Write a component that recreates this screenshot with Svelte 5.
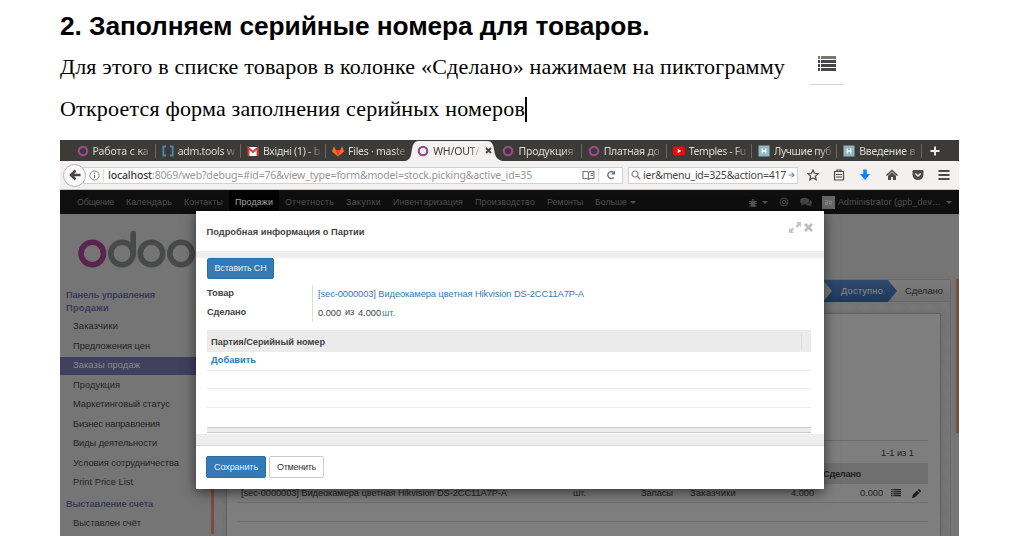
<script>
  // Tracks a label so that it fills the given width in pixels.
  function fit(node, width) {
    const count = [...node.textContent].length;
    const natural = node.getBoundingClientRect().width;
    node.style.letterSpacing = `${(width - natural) / count}px`;
  }

  const tabs = [
    { icon: 'ring', text: 'Работа с ка', w: 56 },
    { icon: 'brackets', text: 'adm.tools w', w: 57 },
    { icon: 'mail', text: 'Вхідні (1) - b', w: 57 },
    { icon: 'fox', text: 'Files · maste', w: 57 },
    { icon: 'ring', text: 'WH/OUT/', w: 46, active: true },
    { icon: 'ring', text: 'Продукция', w: 55 },
    { icon: 'ring', text: 'Платная до', w: 56 },
    { icon: 'tube', text: 'Temples - Fu', w: 57 },
    { icon: 'habr', text: 'Лучшие пуб', w: 57 },
    { icon: 'habr', text: 'Введение в', w: 56 }
  ];

  const nav = [
    ['Общение', 37], ['Календарь', 46], ['Контакты', 39], ['Продажи', 38], ['Отчетность', 49],
    ['Закупки', 35], ['Инвентаризация', 70], ['Производство', 60], ['Ремонты', 36], ['Больше', 32]
  ];

  const side = [
    ['Заказчики', 45], ['Предложения цен', 77], ['Заказы продаж', 67], ['Продукция', 47],
    ['Маркетинговый статус', 97], ['Бизнес направления', 87], ['Виды деятельности', 84],
    ['Условия сотрудничества', 106], ['Print Price List', 60]
  ];
</script>

<article>
  <h1><span use:fit={589.5}>2. Заполняем серийные номера для товаров.</span></h1>
  <div class="para first">
    <span use:fit={725}>Для этого в списке товаров в колонке «Сделано» нажимаем на пиктограмму</span>
    <div class="picto">
      <svg width="18" height="15" viewBox="0 0 18 15">
        <path fill="#77776c" d="M0 0h2v3H0zM3 0h15v3H3z" />
        <path fill="#44444a" d="M0 4h2v3H0zM3 4h15v3H3zM0 8h2v3H0zM3 8h15v3H3zM0 12h2v3H0zM3 12h15v3H3z" />
      </svg>
    </div>
  </div>
  <div class="para second"><span use:fit={465}>Откроется форма заполнения серийных номеров</span><i class="cursor"></i></div>

  <section class="shot">
    <div class="tabs">
      {#each tabs as t, i}
        <div class="tab" class:active={t.active} class:nosep={i === 3 || i === 4}>
          {#if t.active}
            <svg class="shape" width="98" height="21" viewBox="0 0 98 21"><path fill="#f3f2f1" d="M0 21C6 20 6 15 7 9 8 3 10 1 14 1H82c5 0 6 3 7 8 1 6 2 11 9 12z" /></svg>
          {/if}
          <svg class="fav" width="12" height="12" viewBox="0 0 12 12">
            {#if t.icon === 'ring'}
              <circle cx="6" cy="6" r="4.2" fill="none" stroke="#9c4a8c" stroke-width="2.2" />
            {:else if t.icon === 'brackets'}
              <path d="M4 1.5H1.3v9H4M8 1.5h2.7v9H8" fill="none" stroke="#4b86b8" stroke-width="1.8" />
            {:else if t.icon === 'mail'}
              <path fill="#fff" d="M1 2h10v9H1z" /><path d="M1.5 11V3L6 7l4.500-4v8" fill="none" stroke="#d8403a" stroke-width="2" />
            {:else if t.icon === 'fox'}
              <path fill="#fc6d26" d="M0 6.500 2 1l1.700 4h4.600L10 1l2 5.500-6 5z" /><path fill="#e24329" d="M3.700 5h4.600L6 11.500z" />
            {:else if t.icon === 'tube'}
              <rect x="0" y="1.500" width="12" height="9" rx="2" fill="#f00a0a" /><path fill="#fff" d="M4.700 3.800 8.300 6 4.700 8.200z" />
            {:else}
              <path fill="#8db9c7" d="M.5.500h11v11H.5z" /><path d="M4.300 3.500v5M7.700 3.500v5M4 6h4" stroke="#fff" stroke-width="1.300" />
            {/if}
          </svg>
          <span class="clip" class:short={t.active}><span use:fit={t.w}>{t.text}</span></span>
          {#if t.active}
            <svg class="x" width="7" height="7" viewBox="0 0 7 7"><path d="M1 1l5 5M6 1 1 6" stroke="#4a4946" stroke-width="1.900" /></svg>
          {/if}
        </div>
      {/each}
      <svg class="plus" width="10" height="10" viewBox="0 0 10 10"><path d="M5 .5v9M.5 5h9" stroke="#eee" stroke-width="1.900" /></svg>
    </div>

    <div class="toolbar">
      <div class="back"><svg width="12" height="12" viewBox="0 0 12 12"><path d="M6.500 1.500 2 6l4.500 4.500M2 6h9.500" fill="none" stroke="#464646" stroke-width="2.500" /></svg></div>
      <div class="url">
        <svg width="11" height="11" viewBox="0 0 11 11"><circle cx="5.500" cy="5.500" r="4.600" fill="none" stroke="#777" stroke-width=".9" /><path d="M5.500 4.700v3.500M5.500 2.500v1.200" stroke="#666" stroke-width="1.100" /></svg>
        <i class="bar"></i>
        <span class="addr" use:fit={424}><b>localhost</b>:8069/web?debug=#id=76&amp;view_type=form&amp;model=stock.picking&amp;active_id=35</span>
        <svg class="book" width="13" height="10" viewBox="0 0 13 10"><path d="M1 1.500h4l1.500 1L8 1.500h4v7H8l-1.500 1-1.500-1H1zM6.500 3v6M8.500 3.500H11M8.500 5.500H11" fill="none" stroke="#777" stroke-width="1.100" /></svg>
        <i class="bar"></i>
        <svg class="reload" width="10" height="10" viewBox="0 0 10 10"><path d="M7.700 7.500A3.400 3.400 0 1 1 7.600 2.500" fill="none" stroke="#64707c" stroke-width="1.300" /><path fill="#64707c" d="M9 .5v4H5z" /></svg>
      </div>
      <div class="search">
        <svg width="10" height="10" viewBox="0 0 10 10"><circle cx="4" cy="4" r="3" fill="none" stroke="#858585" stroke-width="1.200" /><path d="m6.200 6.200 3 3" stroke="#858585" stroke-width="1.600" /></svg>
        <span use:fit={143}>ier&amp;menu_id=325&amp;action=417</span>
        <svg width="7" height="8" viewBox="0 0 8 8"><path d="M.5 4H7M4 1.300 7 4 4 6.700" fill="none" stroke="#7d8d99" stroke-width="1.300" /></svg>
      </div>
      <div class="tools">
        <svg width="12" height="12" viewBox="0 0 12 12"><path d="m6 1 1.500 3.300 3.600.4-2.700 2.400.8 3.600L6 8.900l-3.200 1.800.8-3.600L.9 4.700l3.600-.4z" fill="none" stroke="#4b4b4b" stroke-width="1.200" /></svg>
        <svg width="12" height="12" viewBox="0 0 12 12"><path d="M1.500 2.500h9v8.500h-9zM4 2.500V1h4v1.500M3 5.500h6M3 8h6" fill="none" stroke="#4b4b4b" stroke-width="1.200" /></svg>
        <svg width="12" height="12" viewBox="0 0 12 12"><path fill="#0a84ff" d="M4.200.5h3.600V5H11L6 11 1 5h3.200z" /></svg>
        <svg width="12" height="12" viewBox="0 0 12 12"><path d="M.5 6.500 6 1.500l5.500 5" fill="none" stroke="#4b4b4b" stroke-width="1.500" /><path fill="#4b4b4b" d="M2 6.800 6 3.300l4 3.500V11H7V8H5v3H2z" /></svg>
        <svg width="12" height="12" viewBox="0 0 12 12"><path fill="#4b4b4b" d="M1.500 1h9q1 0 1 1v3.500a5.500 5.500 0 0 1-11 0V2q0-1 1-1z" /><path d="M3.300 4.500 6 7l2.700-2.500" fill="none" stroke="#f3f2f1" stroke-width="1.500" /></svg>
        <svg width="12" height="12" viewBox="0 0 12 12"><path d="M.5 2h11M.5 6h11M.5 10h11" stroke="#4b4b4b" stroke-width="2" /></svg>
      </div>
    </div>

    <nav>
      {#each nav as [text, w], i}
        <div class:on={i === 3}><span use:fit={w}>{text}</span></div>
      {/each}
      <i class="caret"></i>
      <div class="right">
        <svg width="8" height="9" viewBox="0 0 8 9"><path fill="#555" d="M2.500 2.500a1.500 1.500 0 0 1 3 0zM1.500 3h5v4.500a2.500 1.500 0 0 1-5 0z" /><path d="M0 3.500h8M0 5.500h8M0 8h8" stroke="#555" stroke-width=".8" /></svg>
        <i class="caret c1"></i>
        <svg class="at" width="10" height="10" viewBox="0 0 10 10"><circle cx="5" cy="5" r="4" fill="none" stroke="#444" /><circle cx="5" cy="5" r="1.700" fill="none" stroke="#444" /><path d="M7 3v3.500h1.500" fill="none" stroke="#444" /></svg>
        <svg class="chat" width="12" height="10" viewBox="0 0 12 10"><ellipse cx="4.500" cy="4" rx="4.500" ry="3.300" fill="#444" /><path fill="#444" d="M10 3c3 2 2 4 1 4.500l1 2-3-1c-2 .3-3-.3-3.500-1C8 7 10 6 10 3zM2 6 1 8.500 5 7z" /></svg>
        <svg class="ava" width="13" height="13" viewBox="0 0 13 13"><path fill="#666" d="M0 0h13v13H0z" /><path d="M3.500 4.500h2v4h-2v-2h2M7.500 5h2v3h-2z" fill="none" stroke="#858585" /></svg>
        <span class="user" use:fit={103}>Administrator (gpb_dev…</span>
        <i class="caret c2"></i>
      </div>
    </nav>

    <div class="app">
      <aside>
        <svg class="logo" width="137" height="76" viewBox="0 0 137 76">
          <g fill="none" stroke-width="5.600">
            <circle cx="32.300" cy="39.500" r="11.200" stroke="#5b2350" />
            <g stroke="#484949"><circle cx="62" cy="39.500" r="11.200" /><path d="M73.200 39.500V19.500" stroke-linecap="round" /><circle cx="91.500" cy="39.500" r="11.200" /><circle cx="121" cy="39.500" r="11.200" /></g>
          </g>
        </svg>
        <h4><span use:fit={89}>Панель управления</span></h4>
        <h4><span use:fit={43}>Продажи</span></h4>
        <ul>
          {#each side as [text, w], i}
            <li class:sel={i === 2}><span use:fit={w}>{text}</span></li>
          {/each}
        </ul>
        <h4 class="inv"><span use:fit={87}>Выставление счета</span></h4>
        <ul class="last"><li><span use:fit={68}>Выставлен счёт</span></li></ul>
      </aside>
      <div class="strip"></div>
      <main>
        <div class="status">
          <svg width="74" height="22" viewBox="0 0 74 22">
            <defs><linearGradient id="blue" x2="0" y2="1"><stop stop-color="#2f4a6e" /><stop offset="1" stop-color="#1e3858" /></linearGradient></defs>
            <path fill="url(#blue)" d="M0 0h65l9 11-9 11H0z" /><path fill="#777" d="M0 0l9 11L0 22z" />
          </svg>
          <span class="avail" use:fit={42}>Доступно</span>
          <span use:fit={38}>Сделано</span>
        </div>
        <div class="canvas">
          <div class="sheet">
            <div class="rule"></div>
            <div class="pager"><span use:fit={33}>1-1 из 1</span></div>
            <div class="thead"><span use:fit={38}>Сделано</span></div>
            <div class="trow">
              <div class="c-name"><span use:fit={266}>[sec-0000003] Видеокамера цветная Hikvision DS-2CC11A7P-A</span></div>
              <div class="c-unit"><span use:fit={13}>шт.</span></div>
              <div class="c-from"><span use:fit={32}>Запасы</span></div>
              <div class="c-to"><span use:fit={46}>Заказчики</span></div>
              <div class="c-num"><span use:fit={23}>4.000</span></div>
              <div class="c-done"><span use:fit={23}>0.000</span></div>
              <svg class="rows" width="10" height="8" viewBox="0 0 10 8"><path fill="#1e1e1e" d="M0 0h1.500v1.300H0zM2.300 0H10v1.300H2.300zM0 2h1.500v1.300H0zM2.300 2H10v1.300H2.300zM0 4h1.500v1.300H0zM2.300 4H10v1.300H2.300zM0 6h1.500v1.300H0zM2.300 6H10v1.300H2.300z" /></svg>
              <svg class="pen" width="9" height="9" viewBox="0 0 9 9"><path fill="#1c1c1c" d="M0 9l.7-3L5 1.700 7.300 4 3 8.300zM5.600 1.100 6.400.4q.7-.6 1.300 0l1 1q.6.600 0 1.300l-.8.800z" /></svg>
            </div>
            <div class="trow empty"></div>
          </div>
        </div>
      </main>
      <div class="scroll"></div>
    </div>

    <div class="modal">
      <header>
        <b use:fit={158}>Подробная информация о Партии</b>
        <svg width="12" height="11" viewBox="0 0 12 11"><path fill="#c4c4c4" d="M7 0h5v5l-1.500-1.500-2.200 2.200L6.500 4l2.200-2.200zM0 6l1.500 1.500 2-2 1.600 1.700-2 2L5 11H0z" /></svg>
        <svg class="close" width="9" height="9" viewBox="0 0 9 9"><path d="m1 1 7 7M8 1 1 8" stroke="#bdbdbd" stroke-width="2.700" /></svg>
      </header>
      <div class="body">
        <button class="primary insert"><span use:fit={52}>Вставить СН</span></button>
        <div class="fields">
          <div class="labels"><b use:fit={27}>Товар</b><b use:fit={39}>Сделано</b></div>
          <div class="values">
            <div class="link"><span use:fit={266}>[sec-0000003] Видеокамера цветная Hikvision DS-2CC11A7P-A</span></div>
            <div class="qty"><span use:fit={23}>0.000</span><span class="of" use:fit={9}>из</span><span use:fit={23}>4.000</span><span class="link" use:fit={13}>шт.</span></div>
          </div>
        </div>
        <div class="list">
          <div class="lhead"><b use:fit={114}>Партия/Серийный номер</b><i></i></div>
          <div class="lrow add"><b use:fit={45}>Добавить</b></div>
          <div class="lrow"></div>
          <div class="lrow"></div>
          <div class="lfill"></div>
          <div class="lfoot"></div>
        </div>
      </div>
      <footer>
        <button class="primary save"><span use:fit={44}>Сохранить</span></button>
        <button class="cancel"><span use:fit={39}>Отменить</span></button>
      </footer>
    </div>
  </section>
</article>

<style>
  :global(body) { background: #fff; overflow: hidden; }
  * { box-sizing: border-box; }
  article { width: 1015px; height: 536px; padding-left: 60px; overflow: hidden; color: #000; }
  span, b { white-space: nowrap; }
  svg { display: block; flex: none; }
  i { flex: none; }
  h1 { margin: 0; height: 52px; font: bold 26.300px/52px "Liberation Sans", sans-serif; }
  .para { display: flex; align-items: center; font: 22px "Liberation Serif", serif; }
  .first { height: 29px; line-height: 29px; }
  .second { height: 56px; line-height: 56px; }
  .cursor { width: 2px; height: 25px; background: #000; }
  .picto { width: 34px; height: 32px; margin-left: 25px; margin-top: 5px; border-bottom: 1px solid #d4d4d4; display: flex; justify-content: center; padding-top: 3px; }
  .shot { position: relative; width: 899px; height: 396px; margin-top: 3px; overflow: hidden; display: flex; flex-direction: column; background: #757575; font: 9.300px "Liberation Sans", sans-serif; }

  .tabs { height: 21px; flex: none; background: #3c3b37; padding-left: 11.500px; display: flex; align-items: center; font: 10.500px "Noto Sans", sans-serif; color: #dfdbd2; }
  .tab { width: 85.200px; flex: none; height: 21px; display: flex; align-items: center; padding-left: 5px; position: relative; }
  .tab::after { content: ""; position: absolute; right: 1px; top: 4px; height: 14px; width: 1px; background: #6a6862; }
  .nosep::after { display: none; }
  .active { color: #3c3c3c; }
  .shape { position: absolute; left: -7px; top: 0; }
  .fav { position: relative; margin-top: 1px; }
  .clip { position: relative; width: 58px; margin-left: 4px; overflow: hidden; mask-image: linear-gradient(90deg, #000 78%, #0002); }
  .short { width: 47px; }
  .x { position: relative; margin-left: 5px; }
  .plus { margin-left: 7px; }

  .toolbar { height: 29px; flex: none; background: #f2f1f0; border-bottom: 1px solid #c9c8c6; display: flex; align-items: center; font: 10.500px "Noto Sans", sans-serif; color: #444; }
  .back { width: 23px; height: 23px; flex: none; margin-left: 3px; border: 1px solid #b5b5b5; border-radius: 50%; background: #fbfbfb; display: flex; align-items: center; justify-content: center; z-index: 1; }
  .url { width: 540px; height: 17px; margin-left: -3px; background: #fff; border: 1px solid #d2d1cf; display: flex; align-items: center; padding-left: 5px; color: #969696; }
  .url b { font-weight: 500; color: #3b3b3b; }
  .bar { width: 1px; height: 13px; background: #ddd; margin-left: 3px; }
  .addr { margin-left: 4px; }
  .book { margin-left: 50px; }
  .reload { margin-left: 7px; }
  .search { width: 170px; height: 17px; margin-left: 5px; background: #fff; border: 1px solid #d2d1cf; display: flex; align-items: center; padding-left: 2px; gap: 2px; }
  .tools { display: flex; margin-left: 9px; flex: 1; justify-content: space-between; padding-right: 9px; }

  nav { height: 24px; flex: none; background: #0f0f0f; color: #515151; display: flex; align-items: center; padding-left: 11px; font-size: 8.900px; }
  nav > div { height: 24px; line-height: 24px; padding: 0 6px; flex: none; }
  nav .on { background: #030303; color: #a5a5a5; }
  .caret { border: 3px solid transparent; border-top-color: #555; border-bottom: 0; margin-left: -3px; }
  nav .right { margin-left: auto; padding: 0; display: flex; align-items: center; width: 210px; }
  nav .c1 { margin-left: 5px; }
  .at { margin-left: 11px; }
  .chat { margin-left: 11px; }
  .ava { margin-left: 10px; }
  .user { margin-left: 3px; }
  nav .c2 { margin-left: 5px; }

  .app { flex: 1; display: flex; }
  aside { width: 151px; background: #757575; color: #232323; }
  .logo { height: 76px; margin-bottom: -1px; }
  h4 { margin: 0; height: 12.500px; line-height: 12.500px; padding-left: 6px; color: #3c3b5a; font-size: 9.300px; }
  ul { list-style: none; margin: 3px 0 0; padding: 0; }
  li { height: 19.550px; line-height: 19.550px; padding-left: 13px; }
  .sel { background: linear-gradient(#41405f, #41405f) center / 100% 18px no-repeat; color: #8b8b8b; }
  .inv { margin-top: 5px; }
  .last { margin-top: 4px; }
  .strip { width: 3px; height: 320px; background: #794e3f; }
  main { flex: 1; display: flex; flex-direction: column; padding-top: 65px; }
  .status { height: 23px; border: 1px solid #686868; border-left: 0; background: linear-gradient(#7c7c7c, #707070); display: flex; align-items: center; justify-content: flex-end; padding-right: 7px; color: #202020; }
  .status svg { margin-right: -56px; }
  .avail { color: #8d8d8d; margin-right: 22px; position: relative; }
  .canvas { flex: 1; padding: 11px 9px 0 12px; background: repeating-linear-gradient(45deg, #777 0 1px, #737373 1px 2px); border-right: 1px solid #6a6a6a; }
  .sheet { height: 100%; background: #7e7e7e; border: 1px solid #606060; border-bottom: 0; padding: 126px 12px 0 10px; color: #222; box-shadow: 0 0 3px #6668; }
  .rule { border-top: 1px solid #6a6a6a; height: 1px; }
  .pager { height: 22px; line-height: 24px; text-align: right; padding-right: 14px; }
  .thead { height: 21px; line-height: 23px; background: #6f6f6f; text-align: right; padding-right: 67px; font-weight: bold; }
  .trow { height: 19px; border-bottom: 1px solid #707070; display: flex; align-items: center; padding-left: 4px; }
  .c-name { width: 332px; } .c-unit { width: 68px; } .c-from { width: 49px; } .c-to { width: 101px; } .c-num { width: 69px; } .c-done { width: 31px; }
  .pen { margin-left: 11px; }
  .scroll { width: 3px; height: 154px; margin: 65px 0 0 5px; background: #794e3f; }

  .modal { position: absolute; left: 136px; top: 71px; width: 628px; height: 278px; background: #fff; box-shadow: 0 3px 12px rgba(0, 0, 0, .6); color: #444; display: flex; flex-direction: column; }
  header { height: 40px; display: flex; align-items: center; padding: 1px 11px 0 10.500px; }
  header svg { margin-left: auto; margin-top: -9px; }
  header .close { margin-left: 3px; }
  .body { height: 195px; border: solid #eee; border-width: 7px 0 12px; padding: 0 13px 0 11px; }
  button { font: 9px "Liberation Sans", sans-serif; display: flex; align-items: center; justify-content: center; padding: 0; height: 22px; border: 1px solid #ccc; border-radius: 2px; background: #fff; color: #333; }
  .primary { background: #337ab7; border-color: #2e6da4; color: #e6f2fb; }
  .insert { width: 67px; height: 21px; padding-bottom: 1px; }
  .fields { display: flex; margin-top: 6px; height: 45px; }
  .labels { width: 105px; display: flex; flex-direction: column; align-items: flex-start; gap: 9px; padding-top: 2.500px; }
  .values { border-left: 1px solid #ddd; height: 37px; padding-left: 5px; }
  .values > div { height: 19px; line-height: 19px; }
  .link { color: #337ab7; }
  .qty { display: flex; }
  .of { margin: -1px 4px 0; }
  .qty .link { margin-left: 1px; }
  .lhead { height: 22px; background: #ebebeb; display: flex; align-items: center; justify-content: space-between; padding: 2px 9px 0 4px; }
  .lhead i { width: 1px; height: 16px; background: #ddd; }
  .lrow { height: 18.500px; line-height: 16px; border-bottom: 1px solid #ececec; }
  .add { padding-left: 4px; color: #337ab7; }
  .lfill { height: 19px; }
  .lfoot { height: 6px; background: #ececec; border-top: 1px solid #ccc; border-bottom: 1px solid #ccc; }
  footer { height: 43px; border-top: 1px solid #ddd; margin-top: -1px; display: flex; align-items: center; padding-left: 10px; gap: 3px; }
  .save { width: 60px; }
  .cancel { width: 55px; }
</style>
